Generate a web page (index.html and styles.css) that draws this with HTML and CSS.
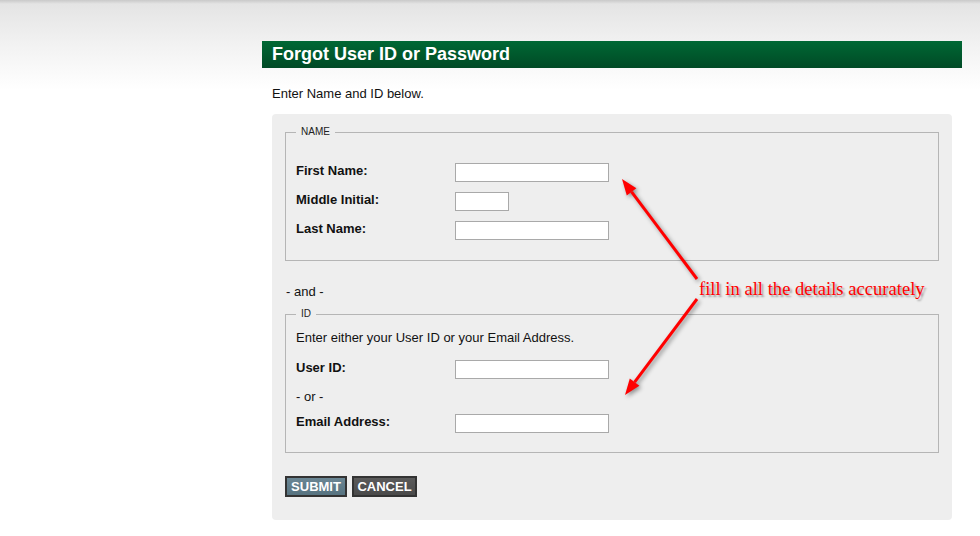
FILE: index.html
```html
<!DOCTYPE html>
<html>
<head>
<meta charset="utf-8">
<title>Forgot User ID or Password</title>
<link rel="stylesheet" href="styles.css">
</head>
<body>
<div class="page">
  <h1 class="title">Forgot User ID or Password</h1>
  <p class="intro">Enter Name and ID below.</p>
  <form class="panel">
    <fieldset class="group group-name">
      <legend>NAME</legend>
      <div class="rows">
        <label class="lbl">First Name:</label>
        <input class="field" type="text">
        <label class="lbl">Middle Initial:</label>
        <input class="field field-sm" type="text">
        <label class="lbl">Last Name:</label>
        <input class="field" type="text">
      </div>
    </fieldset>
    <div class="and">- and -</div>
    <fieldset class="group group-id">
      <legend>ID</legend>
      <div class="hint">Enter either your User ID or your Email Address.</div>
      <div class="rows rows-id">
        <label class="lbl">User ID:</label>
        <input class="field" type="text">
      </div>
      <div class="or">- or -</div>
      <div class="rows">
        <label class="lbl">Email Address:</label>
        <input class="field" type="text">
      </div>
    </fieldset>
    <div class="buttons">
      <button type="button" class="btn btn-submit">SUBMIT</button>
      <button type="button" class="btn btn-cancel">CANCEL</button>
    </div>
  </form>
</div>
<div class="note">fill in all the details accurately</div>
<svg class="arrows" width="980" height="536" viewBox="0 0 980 536">
  <line x1="697" y1="279" x2="631.6" y2="191.8" stroke="#ff0000" stroke-width="3"/>
  <polygon points="622,179 636.4,188.2 626.8,195.4" fill="#ff0000"/>
  <line x1="697" y1="299" x2="634.6" y2="382.2" stroke="#ff0000" stroke-width="3"/>
  <polygon points="625,395 639.4,385.8 629.8,378.6" fill="#ff0000"/>
</svg>
</body>
</html>
```
FILE: styles.css
```css
html, body {
  margin: 0;
  padding: 0;
}
body {
  width: 980px;
  height: 536px;
  overflow: hidden;
  position: relative;
  font-family: "Liberation Sans", Arial, sans-serif;
  font-size: 13px;
  color: #111;
  background: #fff linear-gradient(#c9c9c9 0, #e4e4e4 4px, #f2f2f2 45px, #fff 90px) no-repeat;
  background-size: 100% 90px;
}
.page {
  padding: 41px 0 0 262px;
  width: 700px;
}
.title {
  margin: 0;
  height: 27px;
  line-height: 26px;
  padding-left: 10px;
  font-size: 18px;
  font-weight: bold;
  color: #fff;
  background: linear-gradient(#006834, #004a26);
}
.intro {
  margin: 18px 0 0 10px;
  line-height: 15px;
  height: 15px;
}
.panel {
  margin: 13px 0 0 10px;
  width: 680px;
  box-sizing: border-box;
  background: #eeeeee;
  border-radius: 4px;
  padding: 12px 13px 23px 13px;
}
.group {
  margin: 0;
  border: 1px solid #b5b5b5;
  padding: 25px 10px 20px 10px;
  min-width: 0;
}
.group legend {
  font-size: 10px;
  line-height: 12px;
  padding: 0 5px;
  color: #222;
}
.rows {
  display: grid;
  grid-template-columns: 159px 1fr;
  row-gap: 10px;
  align-items: start;
}
.lbl {
  font-weight: bold;
  line-height: 15px;
  color: #111;
}
.field {
  box-sizing: border-box;
  width: 154px;
  height: 19px;
  margin: 0;
  padding: 0 3px;
  border: 1px solid #a9a9a9;
  background: #fff;
  font-family: inherit;
}
.field-sm {
  width: 54px;
}
.and {
  margin: 23px 0 0 1px;
  line-height: 15px;
}
.group-id {
  margin-top: 9px;
  padding-top: 10px;
  padding-bottom: 19px;
}
.hint {
  line-height: 15px;
}
.rows-id {
  margin-top: 15px;
}
.or {
  line-height: 15px;
  margin: 10px 0 10px 0;
}
.buttons {
  display: flex;
  gap: 5px;
  margin-top: 23px;
}
.btn {
  height: 21px;
  margin: 0;
  padding: 0;
  border: 2px solid #333;
  font-family: inherit;
  font-size: 13px;
  font-weight: bold;
  color: #fff;
  line-height: 17px;
  text-align: center;
  cursor: pointer;
}
.btn-submit {
  width: 62px;
  background: linear-gradient(#6a8694, #577380);
}
.btn-cancel {
  width: 65px;
  background: linear-gradient(#5a5a5a, #4a4a4a);
}
.note {
  position: absolute;
  left: 699px;
  top: 278px;
  font-family: "Liberation Serif", "Times New Roman", serif;
  font-size: 18.6px;
  line-height: 21px;
  color: #ff0000;
  text-shadow: 2px 2px 2px rgba(0, 0, 0, 0.35);
  white-space: nowrap;
}
.arrows {
  position: absolute;
  left: 0;
  top: 0;
  pointer-events: none;
  filter: drop-shadow(2px 2px 2px rgba(0, 0, 0, 0.4));
}
```
